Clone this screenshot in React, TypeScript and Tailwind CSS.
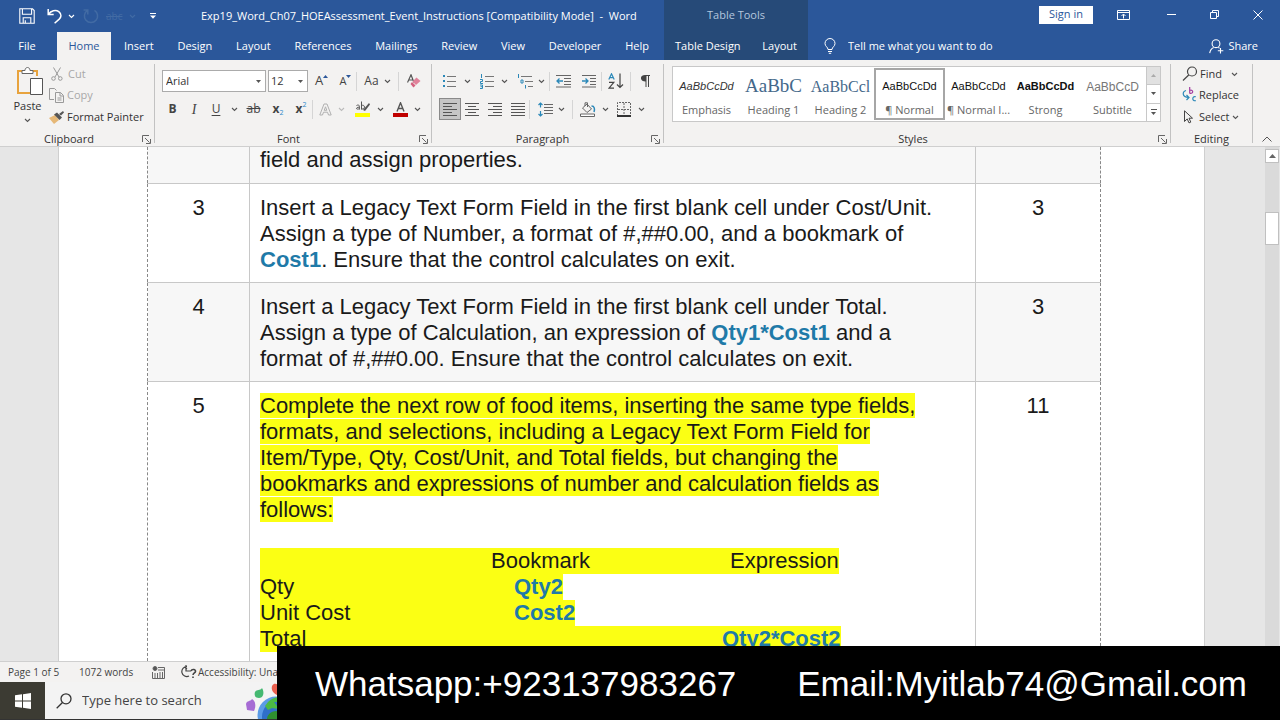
import React from "react";

type Kids = { children?: React.ReactNode; className?: string };

const Chevron = ({ className = "text-[#555]" }: { className?: string }) => (
  <svg width="7" height="5" viewBox="0 0 7 5" className={`shrink-0 ${className}`} fill="none" stroke="currentColor" strokeWidth="1.1">
    <path d="M1 1l2.5 2.5L6 1" />
  </svg>
);

const Triangle = () => (
  <svg width="5" height="3" viewBox="0 0 5 3" className="shrink-0" fill="#555"><path d="M0 0h5L2.5 3z" /></svg>
);

const Launcher = ({ label }: { label: string }) => (
  <button aria-label={label} className="flex h-4 w-4 items-center justify-center">
    <svg width="9" height="9" viewBox="0 0 9 9" fill="none" stroke="#666">
      <path d="M.5 7V.5H7M3 3l4.5 4.5M8.5 4v4.5H4" />
    </svg>
  </button>
);

const Tool = ({ label, className = "", children }: Kids & { label: string }) => (
  <button aria-label={label} className={`flex h-[22px] shrink-0 items-center justify-center text-[#444] ${className}`}>{children}</button>
);

const Rule = () => <div className="h-[19px] w-px shrink-0 bg-[#d5d5d5]" />;

const Group = ({ name, launcher, className = "", children }: Kids & { name: string; launcher?: boolean }) => (
  <section aria-label={name} className={`flex flex-col justify-between border-r border-[#c2c2c2] ${className}`}>
    {children}
    <div className="flex h-2 items-center">
      <span className="flex-1 text-center">{name}</span>
      {launcher && <Launcher label={`${name} settings`} />}
    </div>
  </section>
);

const tabs = ["Insert", "Design", "Layout", "References", "Mailings", "Review", "View", "Developer", "Help"];

function TitleBar() {
  return (
    <div className="flex h-8 items-center">
      <div className="flex h-8 w-[664px] shrink-0 items-center">
        <div className="flex w-[201px] items-center pl-[19px]">
          <button aria-label="Save" className="w-[28px]">
            <svg width="16" height="16" viewBox="0 0 16 16" fill="none" stroke="#fff" strokeWidth="1.1">
              <path d="M.8.8h12.7l1.700 1.700v12.700H.8zM3.400.8v5.400h9.200V.8M4.200 15.200V9.800h7.600v5.400M6.300 12.200v3" />
            </svg>
          </button>
          <button aria-label="Undo" className="flex w-[36px] items-center gap-[6px]">
            <svg width="15" height="16" viewBox="0 0 15 16" fill="none" stroke="#fff" strokeWidth="1.5">
              <path d="M1.200 1v5.400h5.500M1.500 6.200C4 2.800 8.500 1.300 11.800 3.600c3.200 2.600 2.400 5.600.4 7.500L7.600 15.200" />
            </svg>
            <Chevron className="text-white" />
          </button>
          <button aria-label="Redo" className="w-[23px]">
            <svg width="16" height="16" viewBox="0 0 16 16" fill="none" stroke="#426ba4" strokeWidth="1.5">
              <path d="M4.500 2.400A6.600 6.600 0 1 0 11.500 2.400M4.800 6.500V2H.6" />
            </svg>
          </button>
          <button aria-label="Strikethrough" className="flex w-[44px] items-center gap-[7px] text-[10px] text-[#426ba4]">
            <span className="line-through">abc</span><Chevron className="text-[#426ba4]" />
          </button>
          <button aria-label="Customize toolbar">
            <svg width="6" height="6" viewBox="0 0 6 6" fill="#fff"><path d="M0 0h6v1H0zM0 2.500h6L3 5.800z" /></svg>
          </button>
        </div>
        <h1 className="whitespace-pre text-[11px]">Exp19_Word_Ch07_HOEAssessment_Event_Instructions [Compatibility Mode]  -  Word</h1>
      </div>
      <div className="flex h-8 w-[144px] shrink-0 items-center justify-center bg-[#264a78] pb-px text-[11px] text-[#b5c7de]">Table Tools</div>
      <div className="flex flex-1 items-center justify-end pb-[3px]">
        <button className="mr-[24px] h-[18px] w-[54px] bg-white text-[11px] text-[#2b579a]">Sign in</button>
        <button aria-label="Ribbon display options" className="mr-[37px]">
          <svg width="13" height="10" viewBox="0 0 13 10" fill="none" stroke="#fff"><path d="M.5.5h12v9H.5zM.5 2.500h12M6.500 8.500V4.300M4.500 6l2-2 2 2" /></svg>
        </button>
        <button aria-label="Minimize" className="mr-[34px]"><svg width="9" height="9" viewBox="0 0 9 9" stroke="#fff"><path d="M0 4.500h9" /></svg></button>
        <button aria-label="Restore" className="mr-[34px]">
          <svg width="9" height="9" viewBox="0 0 9 9" fill="none" stroke="#fff"><path d="M.5 2.500h6v6h-6zM2.500 2.500v-2h6v6h-2" /></svg>
        </button>
        <button aria-label="Close" className="mr-[17px]"><svg width="10" height="10" viewBox="0 0 10 10" stroke="#fff"><path d="M.5.5l9 9M9.500.5l-9 9" /></svg></button>
      </div>
    </div>
  );
}

function TabBar() {
  return (
    <nav className="flex h-7 text-[11px]">
      <div className="flex w-[664px] shrink-0">
        <button className="w-[57px] pr-[3px]">File</button>
        <button className="w-[54px] bg-[#f3f2f1] text-[#2b579a]">Home</button>
        <div className="flex flex-1 justify-between pl-[13px] pr-[15px]">
          {tabs.map((t) => <button key={t}>{t}</button>)}
        </div>
      </div>
      <div className="flex w-[144px] shrink-0 justify-between bg-[#264a78] pl-[11px] pr-[11px]">
        <button>Table Design</button>
        <button>Layout</button>
      </div>
      <label className="flex flex-1 items-center pl-4">
        <svg width="12" height="16" viewBox="0 0 12 16" fill="none" stroke="#fff">
          <path d="M4 11.500C4 9 1 8.500 1 5.500a5 5 0 0 1 10 0C11 8.500 8 9 8 11.500zM4 13.500h4M4.800 15.300h2.400" />
        </svg>
        <input aria-label="Tell me what you want to do" placeholder="Tell me what you want to do" className="ml-3 w-[180px] bg-transparent outline-none placeholder:text-white" />
      </label>
      <button className="mr-[22px] flex items-center gap-1">
        <svg width="15" height="15" viewBox="0 0 15 15" fill="none" stroke="#fff" strokeWidth="1.100">
          <circle cx="7" cy="4.700" r="3.900" /><path d="M.7 14.200c.5-3.300 2-5 4-5.800M9.300 8.400l1.200.8M11.500 9v5.500M8.800 11.700h5.500" />
        </svg>
        Share
      </button>
    </nav>
  );
}

function Clipboard() {
  return (
    <Group name="Clipboard" launcher className="w-[155px] shrink-0">
      <div className="flex pl-[10px]">
        <button className="flex w-[35px] flex-col items-center pt-[3px]">
          <svg width="28" height="31" viewBox="0 0 28 31" fill="none" className="ml-1">
            <path d="M6 4H2v22h12M16 4h5v5" stroke="#e8a33d" strokeWidth="2" />
            <path d="M6 6.500V3.500h3c0-4 5-4 5 0h3v3z" fill="#fff" stroke="#666" />
            <path d="M14.500 11.500h12v16h-12z" fill="#fff" stroke="#555" />
          </svg>
          <span className="leading-4">Paste</span>
          <span className="flex h-3 items-center"><Chevron /></span>
        </button>
        <div className="ml-1 flex flex-col text-[#a8a8a8]">
          <button className="flex h-[20px] items-center gap-[5px] pl-[2px]">
            <svg width="12" height="14" viewBox="0 0 12 14" fill="none" stroke="#999"><path d="M2.500.5l5.500 9.500M9.500.5L4 10" /><circle cx="2.500" cy="11.500" r="1.800" /><circle cx="9.300" cy="11.500" r="1.800" /></svg>
            Cut
          </button>
          <button className="flex h-[22px] items-center gap-[3px]">
            <svg width="15" height="15" viewBox="0 0 15 15" fill="none" stroke="#999"><path d="M5 11.500H.5V.5h5l2 2M6.500 4.500h5l3 3v7h-8zM11 4.500v3.500h3M8.500 10h4M8.500 12h4" /></svg>
            Copy
          </button>
          <button className="flex h-[22px] items-center gap-[3px] text-[#333]">
            <svg width="15" height="13" viewBox="0 0 15 13"><path d="M0 7l6-3 4 5-5 4z" fill="#e6b877" /><path d="M5 3.500l3-2 5 5-2.500 2.500z" fill="#555" /><path d="M10 3l4-3 1 1.500-3 3z" fill="#555" /></svg>
            Format Painter
          </button>
        </div>
      </div>
    </Group>
  );
}

function FontGroup() {
  return (
    <Group name="Font" launcher className="w-[277px] shrink-0 pl-[7px]">
      <div className="flex flex-col gap-[6px] pt-[6px]">
        <div className="flex items-center">
          <div className="flex h-[22px] w-[104px] items-center border border-[#ababab] bg-white pr-1">
            <select aria-label="Font" className="h-full flex-1 appearance-none bg-transparent pl-[3px] outline-none"><option>Arial</option></select><Triangle />
          </div>
          <div className="ml-[2px] flex h-[22px] w-[40px] items-center border border-[#ababab] bg-white pr-1">
            <select aria-label="Font size" className="h-full min-w-0 flex-1 appearance-none bg-transparent pl-[2px] outline-none"><option>12</option></select><Triangle />
          </div>
          <Tool label="Grow font" className="w-[27px]"><span className="text-[13px]">A</span><svg width="5" height="14" viewBox="0 0 5 14" fill="#2b579a"><path d="M0 4h5L2.500 1z" /></svg></Tool>
          <Tool label="Shrink font" className="w-[21px]"><span className="text-[11px]">A</span><svg width="5" height="14" viewBox="0 0 5 14" fill="#2b579a"><path d="M0 1h5L2.500 4z" /></svg></Tool>
          <Rule />
          <Tool label="Change case" className="w-[41px] gap-[5px]"><span className="text-[12px]">Aa</span><Chevron /></Tool>
          <Rule />
          <Tool label="Clear formatting" className="w-[29px]">
            <svg width="14" height="15" viewBox="0 0 14 15"><path d="M.5 8.500L4 .8l3 7.700M1.800 6h4" fill="none" stroke="#555" strokeWidth="1.200" /><path d="M9.500 3.500L13.500 7l-4.500 4-3.500-3.500z" fill="#e0819a" /><path d="M5 8l3.500 3.500L6.500 13.500 3.500 10z" fill="#d4607e" /></svg>
          </Tool>
        </div>
        <div className="flex items-center">
          <Tool label="Bold" className="w-[21px]"><b className="text-[12px]">B</b></Tool>
          <Tool label="Italic" className="w-[22px]"><i className="font-['Liberation_Serif',serif] text-[14px]">I</i></Tool>
          <Tool label="Underline" className="w-[22px]"><span className="text-[12px] underline underline-offset-2">U</span></Tool>
          <Tool label="Underline style" className="w-[14px]"><Chevron /></Tool>
          <Tool label="Strikethrough" className="w-[25px]"><span className="text-[12px] line-through">ab</span></Tool>
          <Tool label="Subscript" className="w-[24px]"><b className="text-[12px]">x</b><span className="pt-[9px] text-[7px] text-[#2b88c8]">2</span></Tool>
          <Tool label="Superscript" className="w-[22px]"><b className="text-[12px]">x</b><span className="pb-[7px] text-[7px] text-[#2b88c8]">2</span></Tool>
          <Rule />
          <Tool label="Text effects" className="w-[38px] gap-[6px]">
            <svg width="13" height="13" viewBox="0 0 13 13" fill="none" stroke="#b0b0b0"><path d="M.8 12L5 1h3l4.200 11H9.500l-1-2.800h-4l-1 2.800zM5.200 7.300h2.600L6.500 3.800z" /></svg>
            <Chevron className="text-[#bbb]" />
          </Tool>
          <Tool label="Text highlight color" className="w-[37px] gap-[6px]">
            <svg width="16" height="16" viewBox="0 0 16 16"><path d="M1.500 4.500c3-1.500 3 .5 3 4M4.500 6.200c-4-.2-4 3 0 1.500M6.500.5v8M6.500 4.500c4-1.500 4 4.500 0 3.500" fill="none" stroke="#555" /><path d="M8 9l6-7 1 1.500-5 6.500z" fill="#555" /><path d="M0 12h15v4H0z" fill="#ffff00" /></svg>
            <Chevron />
          </Tool>
          <Tool label="Font color" className="w-[37px] gap-[6px]">
            <svg width="15" height="15" viewBox="0 0 15 15"><path d="M4 9.500L7.500.8 11 9.500M5 6.500h5" fill="none" stroke="#555" strokeWidth="1.400" /><path d="M0 11h15v4H0z" fill="#c00000" /></svg>
            <Chevron />
          </Tool>
        </div>
      </div>
    </Group>
  );
}

const Lines = ({ d }: { d: string }) => (
  <svg width="14" height="13" viewBox="0 0 14 13" fill="none" stroke="#555"><path d={d} /></svg>
);

function Paragraph() {
  return (
    <Group name="Paragraph" launcher className="w-[232px] shrink-0 pl-[6px]">
      <div className="flex flex-col gap-[6px] pt-[6px]">
        <div className="flex items-center">
          <Tool label="Bullets" className="w-[38px] gap-[8px]">
            <svg width="13" height="14" viewBox="0 0 13 14"><path d="M0 1h2v2H0zM0 6h2v2H0zM0 11h2v2H0z" fill="#2b88b8" /><path d="M4 2.500h9M4 7.500h9M4 12.500h9" stroke="#777" /></svg><Chevron />
          </Tool>
          <Tool label="Numbering" className="w-[36px] gap-[7px]">
            <svg width="14" height="15" viewBox="0 0 14 15" fill="none"><path d="M1.500 0v4M0 5.500h2.500v2H.5V9.500H3M0 11h2.500v3.500H0M.5 12.700h2" stroke="#2b88b8" /><path d="M5 2.500h9M5 7.500h9M5 12.500h9" stroke="#777" /></svg><Chevron />
          </Tool>
          <Tool label="Multilevel list" className="w-[37px] gap-[5px]">
            <svg width="16" height="15" viewBox="0 0 16 15" fill="none"><path d="M1.500 0v4M4 6h2v3H4zM8.500 11v3.500" stroke="#2b88b8" /><path d="M4 2.500h11M8 7.500h8M11 12.500h5" stroke="#777" /></svg><Chevron />
          </Tool>
          <Rule />
          <Tool label="Decrease indent" className="w-[27px]">
            <svg width="15" height="14" viewBox="0 0 15 14" fill="none"><path d="M0 1.500h15M8 4.500h7M8 7.500h7M8 10.500h7M0 13h15" stroke="#666" /><path d="M7 7H1M3.500 4.500L1 7l2.500 2.500" stroke="#2b88b8" strokeWidth="1.300" /></svg>
          </Tool>
          <Tool label="Increase indent" className="w-[24px]">
            <svg width="14" height="14" viewBox="0 0 14 14" fill="none"><path d="M0 1.500h14M8 4.500h6M8 7.500h6M8 10.500h6M0 13h14" stroke="#666" /><path d="M0 7h6M3.500 4.500L6 7 3.500 9.500" stroke="#2b88b8" strokeWidth="1.300" /></svg>
          </Tool>
          <Rule />
          <Tool label="Sort" className="w-[28px]">
            <svg width="16" height="16" viewBox="0 0 16 16" fill="none"><path d="M.8 6.500L3.500.8l2.700 5.700M1.800 4.600h3.500" stroke="#2b88b8" strokeWidth="1.200" /><path d="M1 9.300h4.800L1 15.200h5M12 .5v14M9 11.500l3 3 3-3" stroke="#444" strokeWidth="1.200" /></svg>
          </Tool>
          <Rule />
          <Tool label="Show formatting marks" className="w-[28px]">
            <svg width="9" height="12" viewBox="0 0 9 12"><path d="M9 0v1H8v11H7V1H5.500v11h-1V6.500C-1.500 6.500-1.500 0 4 0z" fill="#444" /></svg>
          </Tool>
        </div>
        <div className="flex items-center">
          <button aria-label="Align left" className="ml-px flex h-[22px] w-[22px] items-center justify-center border border-[#8a8a8a] bg-[#c6c6c6]"><Lines d="M0 .5h14M0 3.500h9M0 6.500h14M0 9.500h9M0 12.500h14" /></button>
          <Tool label="Center" className="w-[22px]"><Lines d="M0 .5h14M3 3.500h8M0 6.500h14M3 9.500h8M0 12.500h14" /></Tool>
          <Tool label="Align right" className="w-[23px]"><Lines d="M0 .5h14M5 3.500h9M0 6.500h14M5 9.500h9M0 12.500h14" /></Tool>
          <Tool label="Justify" className="w-[23px]"><Lines d="M0 .5h14M0 3.500h14M0 6.500h14M0 9.500h14M0 12.500h14" /></Tool>
          <Rule />
          <Tool label="Line spacing" className="w-[42px] gap-[5px]">
            <svg width="15" height="15" viewBox="0 0 15 15" fill="none"><path d="M6 2.500h9M6 5.500h9M6 8.500h9M6 11.500h9" stroke="#666" /><path d="M2.500 1v4.500M.5 3l2-2 2 2M2.500 9v5M.5 12l2 2 2-2" stroke="#2b88b8" strokeWidth="1.200" /></svg><Chevron />
          </Tool>
          <Rule />
          <Tool label="Shading" className="w-[42px] gap-[6px]">
            <svg width="16" height="15" viewBox="0 0 16 15" fill="none" stroke="#666"><path d="M2.500 6l4.500-4 4.500 5-4.500 3.500zM5 4V.8h2.500V5" /><path d="M11.500 4c3 0 3.500 3 2.500 6" stroke="#2b88b8" strokeWidth="1.500" /><path d="M.5 12h14v2.500H.5z" fill="#fff" /></svg><Chevron />
          </Tool>
          <Tool label="Borders" className="w-[32px] gap-[7px]">
            <svg width="14" height="15" viewBox="0 0 14 15" fill="none" stroke="#666"><path d="M.5 14V.5h13V14M7 1v13M1 7.500h12" strokeDasharray="2 1" /><path d="M0 14h14" stroke="#333" strokeWidth="2" /></svg><Chevron />
          </Tool>
        </div>
      </div>
    </Group>
  );
}

const styles = [
  { name: "Emphasis", sample: "AaBbCcDd", look: "italic text-[11px] text-[#333]" },
  { name: "Heading 1", sample: "AaBbC", look: "font-['Liberation_Serif',serif] text-[19px] text-[#44688a]" },
  { name: "Heading 2", sample: "AaBbCcl", look: "font-['Liberation_Serif',serif] text-[16px] text-[#44688a]" },
  { name: "¶ Normal", sample: "AaBbCcDd", look: "font-['Liberation_Sans',sans-serif] text-[11px] text-[#111]" },
  { name: "¶ Normal I...", sample: "AaBbCcDd", look: "font-['Liberation_Sans',sans-serif] text-[11px] text-[#111]" },
  { name: "Strong", sample: "AaBbCcDd", look: "font-['Liberation_Sans',sans-serif] font-bold text-[11px] text-[#111]" },
  { name: "Subtitle", sample: "AaBbCcD", look: "font-['Liberation_Sans',sans-serif] text-[12px] text-[#777]" },
];

function Styles() {
  return (
    <Group name="Styles" launcher className="min-w-0 flex-1 pl-[8px]">
      <div className="mr-[9px] mt-[2px] flex h-[56px] border border-[#c8c8c8] bg-white">
        {styles.map((s) => (
          <button key={s.name} className={`flex min-w-0 flex-1 flex-col items-center whitespace-nowrap ${s.name === "¶ Normal" ? "my-px border-2 border-[#a6a6a6] pt-px" : "pt-1"}`}>
            <span className={`flex h-[31px] items-center ${s.name === "Emphasis" ? "font-['Liberation_Sans',sans-serif]" : ""} ${s.look}`}>{s.sample}</span>
            <span className="leading-4 text-[#666]">{s.name}</span>
          </button>
        ))}
        <div className="flex w-[14px] shrink-0 flex-col divide-y divide-[#c8c8c8] border-l border-[#c8c8c8]">
          <button aria-label="Previous styles" className="flex flex-1 items-center justify-center bg-[#e1e1e1]"><svg width="5" height="3" fill="#aaa"><path d="M0 3h5L2.500 0z" /></svg></button>
          <button aria-label="Next styles" className="flex flex-1 items-center justify-center"><Triangle /></button>
          <button aria-label="More styles" className="flex flex-1 flex-col items-center justify-center gap-[2px]"><span className="h-px w-[6px] bg-[#555]" /><Triangle /></button>
        </div>
      </div>
    </Group>
  );
}

function Editing() {
  return (
    <Group name="Editing" className="w-[82px] shrink-0">
      <div className="flex flex-col pl-[11px]">
        <button className="flex h-[20px] items-center">
          <svg width="18" height="16" viewBox="0 0 18 16" fill="none" stroke="#444" strokeWidth="1.200"><circle cx="10" cy="5.500" r="4.500" /><path d="M6.700 9L1 14.500" /></svg>
          Find<span className="ml-[9px]"><Chevron /></span>
        </button>
        <button className="flex h-[22px] items-center">
          <svg width="17" height="16" viewBox="0 0 17 16" fill="none" strokeWidth="1.200">
            <path d="M4 3.500C0 5 0 10 6.500 10.500M4.500 8L7 10.500 4.500 13" stroke="#2b88b8" />
            <path d="M7.700 0v6.500M7.700 3.500c4-1.500 4 3.800 0 2.700" stroke="#a33ea1" />
            <path d="M13.800 9.800c-4-1.200-4 5 0 3.800" stroke="#2b88b8" />
          </svg>
          Replace
        </button>
        <button className="flex h-[22px] items-center">
          <svg width="17" height="14" viewBox="0 0 17 14" fill="none" stroke="#444"><path d="M2.500.8v10.700l2.700-2.600 1.800 4 1.800-.8L7 8.200h3.500z" /></svg>
          Select<span className="ml-[3px]"><Chevron /></span>
        </button>
      </div>
    </Group>
  );
}

const Term = ({ children }: Kids) => <b className="text-[#1f7aa8]">{children}</b>;
const Mark = ({ children }: Kids) => <span className="bg-[#fbff14]">{children}</span>;

const rowCells = "border border-[#c8c8c8] align-top pt-[11px] pb-[9px]";

function Row({ step, points, shaded, children }: Kids & { step: string; points: string; shaded?: boolean }) {
  return (
    <tr className={shaded ? "bg-[#f7f7f7]" : "bg-white"}>
      <td className={`${rowCells} border-l-[#888] text-center [border-left-style:dashed]`}>{step}</td>
      <td className={`${rowCells} whitespace-nowrap pl-[10px]`}>{children}</td>
      <td className={`${rowCells} border-r-[#888] text-center [border-right-style:dashed]`}>{points}</td>
    </tr>
  );
}

function Document() {
  return (
    <main className="flex min-h-0 flex-1 bg-[#e6e6e6]">
      <div className="flex min-w-0 flex-1 overflow-hidden pl-[58px] pr-[60px]">
        <article className="flex min-w-0 flex-1 items-start border-x border-[#cfcfcf] bg-white pl-[88px] pr-[103px] font-['Liberation_Sans',sans-serif] text-[22px] leading-[26px] text-[#1a1a1a]">
          <table className="w-full table-fixed border-collapse">
            <colgroup><col className="w-[102px]" /><col /><col className="w-[125px]" /></colgroup>
            <tbody>
              <tr className="bg-[#f7f7f7]">
                <td className="border border-t-0 border-[#c8c8c8] border-l-[#888] [border-left-style:dashed]" />
                <td className="border border-t-0 border-[#c8c8c8] pb-[10px] pl-[10px]">field and assign properties.</td>
                <td className="border border-t-0 border-[#c8c8c8] border-r-[#888] [border-right-style:dashed]" />
              </tr>
              <Row step="3" points="3">
                Insert a Legacy Text Form Field in the first blank cell under Cost/Unit.<br />
                Assign a type of Number, a format of #,##0.00, and a bookmark of<br />
                <Term>Cost1</Term>. Ensure that the control calculates on exit.
              </Row>
              <Row step="4" points="3" shaded>
                Insert a Legacy Text Form Field in the first blank cell under Total.<br />
                Assign a type of Calculation, an expression of <Term>Qty1*Cost1</Term> and a<br />
                format of #,##0.00. Ensure that the control calculates on exit.
              </Row>
              <Row step="5" points="11">
                <Mark>
                  Complete the next row of food items, inserting the same type fields,<br />
                  formats, and selections, including a Legacy Text Form Field for<br />
                  Item/Type, Qty, Cost/Unit, and Total fields, but changing the<br />
                  bookmarks and expressions of number and calculation fields as<br />
                  follows:
                </Mark>
                <div className="mt-[25px] flex flex-col items-start">
                  <div className="flex bg-[#fbff14]"><span className="w-[231px]" /><span className="w-[239px]">Bookmark</span><span>Expression</span></div>
                  <div className="flex bg-[#fbff14]"><span className="w-[254px]">Qty</span><Term>Qty2</Term></div>
                  <div className="flex bg-[#fbff14]"><span className="w-[254px]">Unit Cost</span><Term>Cost2</Term></div>
                  <div className="flex bg-[#fbff14]"><span className="w-[462px]">Total</span><Term>Qty2*Cost2</Term></div>
                </div>
              </Row>
            </tbody>
          </table>
        </article>
      </div>
      <div className="mr-px flex w-[14px] flex-col bg-[#dadada] pt-[2px]">
        <button aria-label="Scroll up" className="flex h-[14px] items-center justify-center border border-[#c0c0c0] bg-white"><svg width="7" height="4" fill="#666"><path d="M0 4h7L3.500 0z" /></svg></button>
        <div className="mt-[49px] h-[33px] border border-[#c0c0c0] bg-white" />
      </div>
    </main>
  );
}

function StatusBar() {
  return (
    <div className="flex h-[21px] shrink-0 items-center border-t border-[#cfcfcf] bg-[#f3f2f1] pl-[8px] text-[10px] text-[#444]">
      <span className="w-[71px]">Page 1 of 5</span>
      <span className="w-[73px]">1072 words</span>
      <svg width="13" height="13" viewBox="0 0 13 13" fill="none" stroke="#666" className="mr-[16px]"><circle cx="3" cy="2.500" r="2" fill="#555" /><path d="M6 1.500h6.500v11H.5V6M6 4h6M3 12V7M5.500 12V7M8 12V6M10.500 12V6" /></svg>
      <svg width="16" height="14" viewBox="0 0 16 14" fill="none" stroke="#444" strokeWidth="1.200" className="mr-px"><path d="M6 1.500a5 5 0 1 0 2 9.500M5 0v6h5M3.500 2L6 4" /><path d="M10 6c1-2.500 5-1.500 4.500.5-.3 1.500-2.300 1.500-2.500 3.500M12 11.500V13" strokeWidth="1.600" /></svg>
      <span>Accessibility: Unavailable</span>
    </div>
  );
}

function Taskbar() {
  return (
    <div className="flex h-[38px] shrink-0 border-b border-[#333] bg-[#f3f3f3]">
      <button aria-label="Start" className="flex w-[45px] items-center justify-center bg-[#3c3b33]">
        <svg width="16" height="16" viewBox="0 0 16 16" fill="#fff"><path d="M0 2.300L7 1.300V7.600H0zM8 1.200L16 0v7.600H8zM0 8.500h7v6.200L0 13.700zM8 8.500h8V16l-8-1.200z" /></svg>
      </button>
      <label className="flex items-center pl-[11px] text-[13px]">
        <svg width="16" height="16" viewBox="0 0 16 16" fill="none" stroke="#333" strokeWidth="1.300"><circle cx="10" cy="5.800" r="5" /><path d="M6.500 9.500L.7 15.300" /></svg>
        <input aria-label="Search" placeholder="Type here to search" className="ml-[10px] w-[163px] bg-transparent outline-none placeholder:text-[#444]" />
      </label>
      <svg width="48" height="37" viewBox="0 0 48 37" className="shrink-0">
        <circle cx="31" cy="33" r="18.500" fill="#5b9be6" />
        <circle cx="34" cy="35" r="17" fill="#2f6fc9" />
        <path d="M23 20c4-4 10-6 14-4l-2 4-6 0 3 4 2 3-7-1-4 2-3-4z" fill="#4cb944" />
        <path d="M22 37c0-4 4-8 9-8l6 2v6z" fill="#2f8f2f" />
        <path d="M10 10c2-3 5-1 7-4 3 5 1 10-3 10s-5-3-4-6z" fill="#45b871" />
        <path d="M1 22c1-4 4-2 6-5 4 2 4 8 2 12l-7-1z" fill="#a66bd4" />
        <path d="M27 4c2-4 6-2 7 0 4-3 7 1 5 5l-7 4c-4-2-6-5-5-9z" fill="#e9604f" />
      </svg>
    </div>
  );
}

export default function App() {
  return (
    <div className="relative flex h-screen min-w-[1200px] flex-col overflow-hidden font-['Open_Sans',sans-serif] text-[11px] text-[#333]">
      <header className="shrink-0 bg-[#2b579a] text-white"><TitleBar /><TabBar /></header>
      <div className="flex h-[87px] shrink-0 border-b border-[#cfcfcf] bg-[#f3f2f1] pb-[3px] pt-[4px]">
        <Clipboard />
        <FontGroup />
        <Paragraph />
        <Styles />
        <Editing />
        <button aria-label="Collapse ribbon" className="flex w-[27px] shrink-0 items-end justify-center pb-px">
          <svg width="10" height="6" viewBox="0 0 10 6" fill="none" stroke="#555"><path d="M.5 5.500L5 1l4.500 4.500" /></svg>
        </button>
      </div>
      <Document />
      <StatusBar />
      <Taskbar />
      <div className="absolute bottom-0 left-[277px] right-0 flex h-[74px] items-center justify-between whitespace-nowrap bg-black pl-[38px] pr-[33px] pt-[3px] font-['Liberation_Sans',sans-serif] text-[35px] text-white">
        <span>Whatsapp:+923137983267</span>
        <span>Email:Myitlab74@Gmail.com</span>
      </div>
    </div>
  );
}
